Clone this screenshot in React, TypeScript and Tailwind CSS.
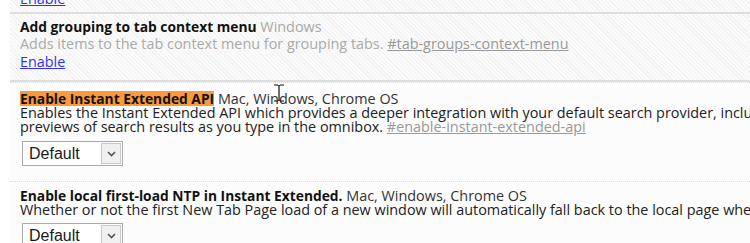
import React from "react";

type Flag = {
  title: string;
  platforms: string;
  description: string[];
  anchor: string;
};

const hatch =
  "bg-[repeating-linear-gradient(45deg,#f2f2f2_0px,#f2f2f2_1px,#fbfbfb_1px,#fbfbfb_3px)]";

function Select({ top }: { top: string }) {
  return (
    <div className={`${top} ml-[2px] flex h-[25px] w-[101px] items-stretch border border-[#a9a9a9] bg-white`}>
      <span className="flex flex-1 items-center pl-[6px] font-['Liberation_Sans'] text-[16px] text-[#1a1a1a]">
        Default
      </span>
      <span className="my-[1px] mr-[1px] flex w-[20px] items-center justify-center border border-[#c8c8c8] bg-[#f0f0f0]">
        <svg width="9" height="6" viewBox="0 0 9 6">
          <path d="M1 1 L4.5 4.5 L8 1" fill="none" stroke="#555" strokeWidth="1.6" />
        </svg>
      </span>
    </div>
  );
}

function SupportedFlag({
  flag,
  highlight,
  pad,
  selectTop,
}: {
  flag: Flag;
  highlight?: boolean;
  pad: string;
  selectTop: string;
}) {
  return (
    <div className={`border-t border-dotted border-[#dcdcdc] pl-[10px] ${pad}`}>
      <div className="h-[15px] whitespace-nowrap leading-[15px]">
        <span
          className={
            highlight
              ? "inline-block bg-[#fa9a3c] text-[13.8px] font-bold leading-[15px] text-[#111]"
              : "text-[13.8px] font-bold text-[#111]"
          }
        >
          {flag.title}
        </span>{" "}
        <span className="text-[#333]">{flag.platforms}</span>
      </div>
      <div className="whitespace-nowrap leading-[14px] text-[#222]">
        {flag.description.map((line, i) => (
          <div key={i}>
            {line}
            {i === flag.description.length - 1 && (
              <>
                {" "}
                <a className="text-[#999] underline">{flag.anchor}</a>
              </>
            )}
          </div>
        ))}
      </div>
      <Select top={selectTop} />
    </div>
  );
}

export default function App() {
  return (
    <div className="relative h-[243px] w-[750px] overflow-hidden bg-white font-['Open_Sans'] text-[14.4px]">
      <div className={`ml-[10px] ${hatch}`}>
        <div className="flex h-[12px] items-end overflow-hidden pb-[5px] pl-[10px]">
          <a className="leading-[16px] text-[#3333ee] underline">Enable</a>
        </div>
        <div className="border-t-2 border-[#dedede] pl-[10px] pt-[5px] pb-[9px]">
          <div className="whitespace-nowrap leading-[16px]">
            <span className="text-[13.8px] font-bold text-[#111]">Add grouping to tab context menu</span>{" "}
            <span className="text-[#a8a8a8]">Windows</span>
          </div>
          <div className="whitespace-nowrap leading-[18px] text-[#aaa]">
            Adds items to the tab context menu for grouping tabs.{" "}
            <a className="text-[#999] underline">#tab-groups-context-menu</a>
          </div>
          <a className="block leading-[18px] text-[#3333ee] underline">Enable</a>
        </div>
      </div>
      <div className="ml-[10px] border-t-2 border-[#dedede] bg-[#fcfcfc]">
        <SupportedFlag
          highlight
          pad="pt-[8px] pb-[15px]"
          selectTop="mt-[7px]"
          flag={{
            title: "Enable Instant Extended API",
            platforms: "Mac, Windows, Chrome OS",
            description: [
              "Enables the Instant Extended API which provides a deeper integration with your default search provider, including a new NTP,",
              "previews of search results as you type in the omnibox.",
            ],
            anchor: "#enable-instant-extended-api",
          }}
        />
        <SupportedFlag
          pad="pt-[6px] pb-[13px]"
          selectTop="mt-[6px]"
          flag={{
            title: "Enable local first-load NTP in Instant Extended.",
            platforms: "Mac, Windows, Chrome OS",
            description: [
              "Whether or not the first New Tab Page load of a new window will automatically fall back to the local page when Instant Extended is enabled.",
            ],
            anchor: "#enable-local-first-load-ntp",
          }}
        />
      </div>
      <svg
        className="absolute left-[272px] top-[84px]"
        width="14"
        height="18"
        viewBox="0 0 14 18"
      >
        <path
          d="M2 1 H6 M8 1 H12 M7 2 V16 M2 17 H6 M8 17 H12 M6 1.5 L7 2 L8 1.5 M6 16.5 L7 16 L8 16.5"
          stroke="#111"
          strokeWidth="1.2"
          fill="none"
        />
      </svg>
    </div>
  );
}
